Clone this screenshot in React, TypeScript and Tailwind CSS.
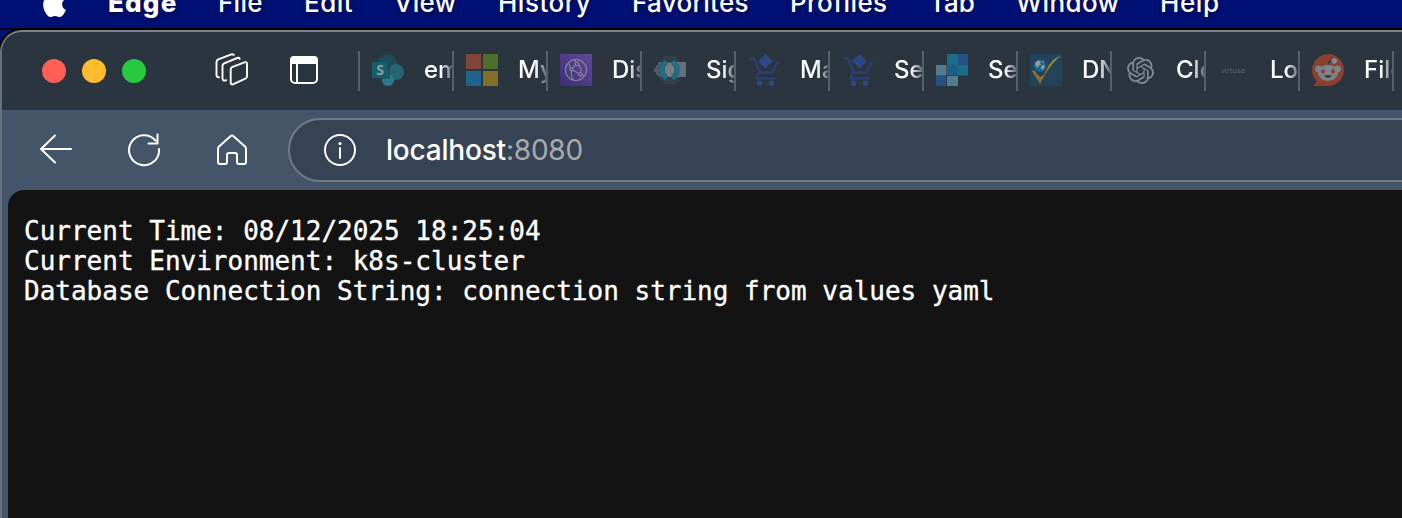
import React from 'react';
import { FaApple } from 'react-icons/fa';
import { SiOpenai } from 'react-icons/si';

const menus = [
  { label: 'Edge', cls: 'w-[110px] font-extrabold tracking-[1.2px]' },
  { label: 'File', cls: 'w-[86px] font-medium tracking-[0.3px]' },
  { label: 'Edit', cls: 'w-[90px] font-medium tracking-[0.5px]' },
  { label: 'View', cls: 'w-[104px] font-medium tracking-[0.2px]' },
  { label: 'History', cls: 'w-[134px] font-medium tracking-[0.5px]' },
  { label: 'Favorites', cls: 'w-[158px] font-medium tracking-[0.3px]' },
  { label: 'Profiles', cls: 'w-[139px] font-medium tracking-[0.4px]' },
  { label: 'Tab', cls: 'w-[87px] font-medium' },
  { label: 'Window', cls: 'w-[144px] font-medium tracking-[0.4px]' },
  { label: 'Help', cls: 'w-[80px] font-medium tracking-[0.6px]' },
];

function SharePoint() {
  return (
    <svg width="32" height="32" viewBox="0 0 32 32">
      <circle cx="15.5" cy="9.5" r="9.5" fill="#1c4d59" />
      <circle cx="24" cy="18" r="8" fill="#286573" />
      <circle cx="16" cy="26" r="6" fill="#30788a" />
      <rect x="1" y="9" width="17" height="16" fill="#173f49" opacity=".5" />
      <rect y="8" width="16" height="16" rx="1" fill="#136069" />
      <text x="8" y="21" textAnchor="middle" fontSize="14" fontWeight="700" fill="#8f9fa5" fontFamily="Open Sans, sans-serif">S</text>
    </svg>
  );
}

function Squares() {
  return (
    <svg width="32" height="32" viewBox="0 0 32 32">
      <path fill="#80453a" d="M0 0h15v15H0z" />
      <path fill="#4f6d2b" d="M17 0h15v15H17z" />
      <path fill="#1d648c" d="M0 17h15v15H0z" />
      <path fill="#836f2b" d="M17 17h15v15H17z" />
    </svg>
  );
}

function Network() {
  return (
    <svg width="32" height="32" viewBox="0 0 32 32">
      <defs>
        <linearGradient id="net" x1="0" y1="1" x2="1" y2="0">
          <stop stopColor="#3c2e74" />
          <stop offset="1" stopColor="#624b98" />
        </linearGradient>
      </defs>
      <path fill="url(#net)" d="M0 0h32v32H0z" />
      <g fill="none" stroke="#8b87a5" strokeWidth="1.1">
        <circle cx="16" cy="16" r="10.5" />
        <circle cx="17" cy="10" r="1.8" />
        <circle cx="11.5" cy="15.5" r="1.6" />
        <circle cx="20.5" cy="20.5" r="1.7" />
        <path d="M15.5 11.2 12.4 14M13 16.2l6 3.4M18.5 10.8c2 2.4 3 5 2.4 8M11.2 17.2c-.4 2.6.2 5.2 1.8 8M14 6c1 .4 1.8 1.2 2.4 2.2M22.2 21l2 .4M9 9.5c.2 2 .8 3.4 1.6 4.6" />
      </g>
    </svg>
  );
}

function Signal() {
  return (
    <svg width="32" height="32" viewBox="0 0 32 32">
      <path fill="#353e47" d="M9 2h14v3h3v22h-3v3H9v-3H6V5h3z" />
      <path fill="#505a64" d="M4 8h20v15H4v-2H2v-3H0v-4h2v-3h2z" />
      <path fill="#66707a" d="M23 8h9v15h-9z" />
      <path fill="#747e87" d="M14 9h3l3 4v6l-3 4h-3l-3-4v-6z" />
      <path fill="none" stroke="#345d6c" strokeWidth="5" d="M12 8 8 13v6l4 5M19 8l4 5v6l-4 5" />
      <path fill="none" stroke="#187489" strokeWidth="3.6" d="M12 7 8 13v6l4 6M19 7l4 6v6l-4 6" />
    </svg>
  );
}

function Cart() {
  return (
    <svg width="32" height="32" viewBox="0 0 32 32">
      <g fill="none" stroke="#293f76" strokeWidth="2.6">
        <path d="M1 4.5h4.5l6.5 14h12L30 7.5" />
        <path d="m11.5 18-3 5.2q-.7 1.3 1 1.3H28" />
      </g>
      <path fill="#2d4788" d="m17.5 0 7.3 7.3-7.3 7.2-7.3-7.2z" />
      <circle cx="11.5" cy="29.3" r="2.8" fill="#2d4788" />
      <circle cx="23.5" cy="29.3" r="2.8" fill="#2d4788" />
    </svg>
  );
}

function Grid() {
  return (
    <svg width="32" height="32" viewBox="0 0 32 32">
      <path fill="#1b6b89" d="M11 0h11v11H11z" />
      <path fill="#245288" d="M22 0h10v11H22zM0 22h10v10H0z" />
      <path fill="#557c8c" d="M0 11h10.5v10.5H0zM11 22h11v10H11z" />
      <path fill="#1b6187" d="M11 11h11v10.5H11z" />
      <path fill="#1a6d89" d="M22 11h10v10.5H22z" />
    </svg>
  );
}

function Check() {
  return (
    <svg width="32" height="32" viewBox="0 0 32 32">
      <defs>
        <linearGradient id="tick" x1="0" y1="1" x2="0" y2="0">
          <stop stopColor="#91602b" />
          <stop offset="1" stopColor="#a49830" />
        </linearGradient>
      </defs>
      <path fill="#23425c" d="M0 0h32v32H0z" />
      <path fill="url(#tick)" d="M2 17c2-1 3-.3 4 2l4 4 4-2C18 12 22 4 31 2c-8 5-14 15-21 28z" />
      <circle cx="10" cy="12" r="7" fill="#23425c" />
      <circle cx="10" cy="11.8" r="6.2" fill="#1d6287" />
      <path fill="#879c9e" d="m5 9 3-2.5 3 .8-1 2 1.5 1.5-3 1-.5 2L5.5 12zM12 11l3 .5-.8 3-2 1.8-1.4-2.6zM12 6.5l2.5 1.7-1.5 1z" />
    </svg>
  );
}

function Virtusa() {
  return (
    <span className="block w-8 pr-0.5 text-center font-['Open_Sans',sans-serif] text-[7.5px] leading-8 text-[#59626c]">
      virtusa
    </span>
  );
}

function Reddit() {
  return (
    <svg width="32" height="32" viewBox="0 0 32 32">
      <path fill="#8c4130" d="M16 0a16 16 0 1 1 0 32H2.5q-1.500 0-.5-1.300l2.700-3.400A16 16 0 0 1 16 0z" />
      <path d="M16 11.5C16.500 8.500 18 7 20 7" fill="none" stroke="#2b3540" strokeWidth="1.4" />
      <circle cx="22.3" cy="7" r="2.7" fill="#858d94" />
      <circle cx="6.500" cy="15" r="3.500" fill="#7b848b" />
      <circle cx="25.500" cy="15" r="3.500" fill="#7b848b" />
      <ellipse cx="16" cy="18.800" rx="10" ry="8" fill="#7b848b" />
      <ellipse cx="11" cy="17.500" rx="1.900" ry="2.200" fill="#963b30" />
      <ellipse cx="21" cy="17.500" rx="1.900" ry="2.200" fill="#963b30" />
      <path d="M12.300 21.600q3.700-.6 7.400 0c-1.200 3-6.200 3-7.400 0z" fill="#2b3540" />
    </svg>
  );
}

const tabs = [
  { icon: <SharePoint />, title: 'em' },
  { icon: <Squares />, title: 'My' },
  { icon: <Network />, title: 'Dis' },
  { icon: <Signal />, title: 'Sig' },
  { icon: <Cart />, title: 'Ma' },
  { icon: <Cart />, title: 'Se' },
  { icon: <Grid />, title: 'Se' },
  { icon: <Check />, title: 'DN' },
  { icon: <SiOpenai size={27} color="#838a92" />, title: 'Clo' },
  { icon: <Virtusa />, title: 'Lo' },
  { icon: <Reddit />, title: 'File' },
];

export default function App() {
  return (
    <div className="flex h-[518px] w-full flex-col overflow-hidden bg-[#001074] font-['Inter',sans-serif] text-white">
      <div className="flex h-[30px] shrink-0 overflow-hidden border-b-2 border-black/80 pl-[39px]">
        <FaApple size={31} className="-mt-[12px] mr-[38px] shrink-0" />
        {menus.map((m) => (
          <span key={m.label} className={`-mt-[13px] h-[32px] shrink-0 text-[26px] leading-[32px] [text-shadow:0_2px_4px_rgba(0,0,0,0.4)] ${m.cls}`}>
            {m.label}
          </span>
        ))}
      </div>

      <div className="flex w-[1424px] flex-1 flex-col overflow-hidden rounded-tl-[22px] border-l-2 border-t-2 border-t-[#7b838b] border-l-[#66717e] bg-[#455569] shadow-[0_0_0_2px_#000]">
        <div className="flex h-[78px] shrink-0 items-center bg-[#2b3540] pl-[40px]">
          <div className="flex gap-4">
            <i className="size-6 rounded-full bg-[#ff5f57]" />
            <i className="size-6 rounded-full bg-[#febc2e]" />
            <i className="size-6 rounded-full bg-[#28c840]" />
          </div>
          <svg className="mb-[2px] ml-[69px] mr-px shrink-0" width="34" height="34" viewBox="0 0 34 34" fill="none" stroke="white" strokeWidth="1.9" strokeLinecap="round" strokeLinejoin="round">
            <path d="M17 14.200 29.500 9.300q2.500-.8 2.500 1.600v12.400q0 1.800-1.600 2.400l-12 5.500q-2.700 1-2.700-1.700V16.400q0-1.600 1.300-2.200z" />
            <path d="M11.200 27.200c-2.200 1-3.700.2-3.700-1.700V12.800q0-1.800 1.700-2.500L22.200 5q1.700-.6 2.500.8" />
            <path d="M4 24.200c-1.700.1-2.500-.5-2.500-2.200V9q0-1.900 1.800-2.600l13-5q1.600-.5 2.400.5" />
          </svg>
          <svg className="mb-[2px] ml-[40px] mr-[40px] shrink-0" width="28" height="28" viewBox="0 0 28 28">
            <rect x="1" y="1" width="26" height="26" rx="4" fill="none" stroke="white" strokeWidth="2" />
            <path d="M4 0h20a4 4 0 0 1 4 4v4H0V4a4 4 0 0 1 4-4z" fill="white" />
            <path d="M7 8v19" stroke="white" strokeWidth="2" />
          </svg>
          {tabs.map((t, i) => (
            <div key={i} className="flex h-10 w-[94px] shrink-0 items-center overflow-hidden border-l-2 border-[#56606b] pb-[2px] pl-3">
              <div className="mr-5 flex size-8 shrink-0 items-center justify-center">{t.icon}</div>
              <span className="w-7 overflow-hidden whitespace-nowrap text-[24px] font-medium leading-8 [mask-image:linear-gradient(to_right,black_60%,transparent_115%)]">
                {t.title}
              </span>
            </div>
          ))}
          <i className="h-10 w-0.5 shrink-0 bg-[#56606b]" />
        </div>

        <div className="flex h-20 shrink-0 items-center pl-[37px]">
          <svg width="34" height="32" viewBox="0 0 34 32" fill="none" stroke="white" strokeWidth="2" strokeLinecap="round" strokeLinejoin="round">
            <path d="M32 15H2M16 1.500 2 15l14 13.500" />
          </svg>
          <svg className="ml-[54px]" width="34" height="34" viewBox="0 0 34 34" fill="none" stroke="white" strokeWidth="2" strokeLinecap="round" strokeLinejoin="round">
            <path d="M32 16a15 15 0 1 1-3.500-8.500M30.500 1.500v9h-9" />
          </svg>
          <svg className="ml-[56px]" width="30" height="32" viewBox="0 0 30 32" fill="none" stroke="white" strokeWidth="2" strokeLinejoin="round">
            <path d="M13.500 2.200q1.500-1.300 3 0L28 12.500q1 1 1 2.300V28q0 2-2 2h-5q-2 0-2-2v-7q0-2-2-2h-6q-2 0-2 2v7q0 2-2 2H3q-2 0-2-2V14.800q0-1.300 1-2.300z" />
          </svg>
          <div className="ml-[41px] flex h-16 flex-1 items-center rounded-l-full border-2 border-[#717b87] bg-[#364354] pl-[34px]">
            <svg width="32" height="32" viewBox="0 0 32 32">
              <circle cx="16" cy="16" r="15" fill="none" stroke="white" strokeWidth="2" />
              <circle cx="16" cy="9.500" r="1.600" fill="white" />
              <path d="M16 14v10" stroke="white" strokeWidth="2" strokeLinecap="round" />
            </svg>
            <span className="ml-[30px] text-[28px] font-medium leading-9 tracking-[-0.2px]">
              localhost<span className="font-normal text-[#a9abac]">:8080</span>
            </span>
          </div>
        </div>

        <pre className="ml-[6px] flex-1 rounded-tl-[16px] bg-[#131313] pl-4 pt-[26px] font-['DejaVu_Sans_Mono',monospace] text-[26px] leading-[30px] [-webkit-text-stroke:0.35px_white]">
          {'Current Time: 08/12/2025 18:25:04\nCurrent Environment: k8s-cluster\nDatabase Connection String: connection string from values yaml'}
        </pre>
      </div>
    </div>
  );
}
